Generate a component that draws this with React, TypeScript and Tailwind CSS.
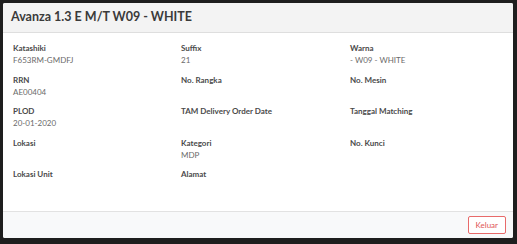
import React from "react";

const rows: { label: string; value?: string }[][] = [
  [
    { label: "Katashiki", value: "F653RM-GMDFJ" },
    { label: "Suffix", value: "21" },
    { label: "Warna", value: "- W09 - WHITE" },
  ],
  [
    { label: "RRN", value: "AE00404" },
    { label: "No. Rangka" },
    { label: "No. Mesin" },
  ],
  [
    { label: "PLOD", value: "20-01-2020" },
    { label: "TAM Delivery Order Date" },
    { label: "Tanggal Matching" },
  ],
  [
    { label: "Lokasi" },
    { label: "Kategori", value: "MDP" },
    { label: "No. Kunci" },
  ],
  [{ label: "Lokasi Unit" }, { label: "Alamat" }, { label: "" }],
];

export default function App() {
  return (
    <div
      className="w-[517px] h-[244px] bg-[#1e1e1e] pt-[3px] pl-[3px] overflow-hidden"
      style={{ fontFamily: "Lato, 'Open Sans', sans-serif" }}
    >
      <div className="w-[510px] h-[235px] bg-white rounded-[2px] flex flex-col overflow-hidden">
        <div className="h-[30px] bg-[#f3f3f3] border-b border-[#dedede] flex items-center px-[8px] shrink-0">
          <span className="text-[12.5px] font-bold text-[#3a3a3a] leading-none">
            Avanza 1.3 E M/T W09 - WHITE
          </span>
        </div>
        <div className="flex-1 px-[10px] pt-[9px]">
          {rows.map((row, i) => (
            <div key={i} className="grid grid-cols-[168px_169px_1fr] mb-[7.5px]">
              {row.map((c, j) => (
                <div key={j} className="flex flex-col">
                  <span className="text-[8px] font-bold text-[#4a4a4a] leading-[12px] h-[12px]">
                    {c.label}
                  </span>
                  <span className="text-[8px] text-[#6a6a6a] leading-[12px] h-[12px]">
                    {c.value ?? ""}
                  </span>
                </div>
              ))}
            </div>
          ))}
        </div>
        <div className="h-[27px] bg-[#f8f9fa] border-t border-[#e2e2e2] flex items-center justify-end pr-[7px] shrink-0">
          <button className="h-[18px] px-[7px] border border-[#e86a6a] text-[#e05555] text-[8px] rounded-[2px] bg-white leading-none">
            Keluar
          </button>
        </div>
      </div>
    </div>
  );
}
